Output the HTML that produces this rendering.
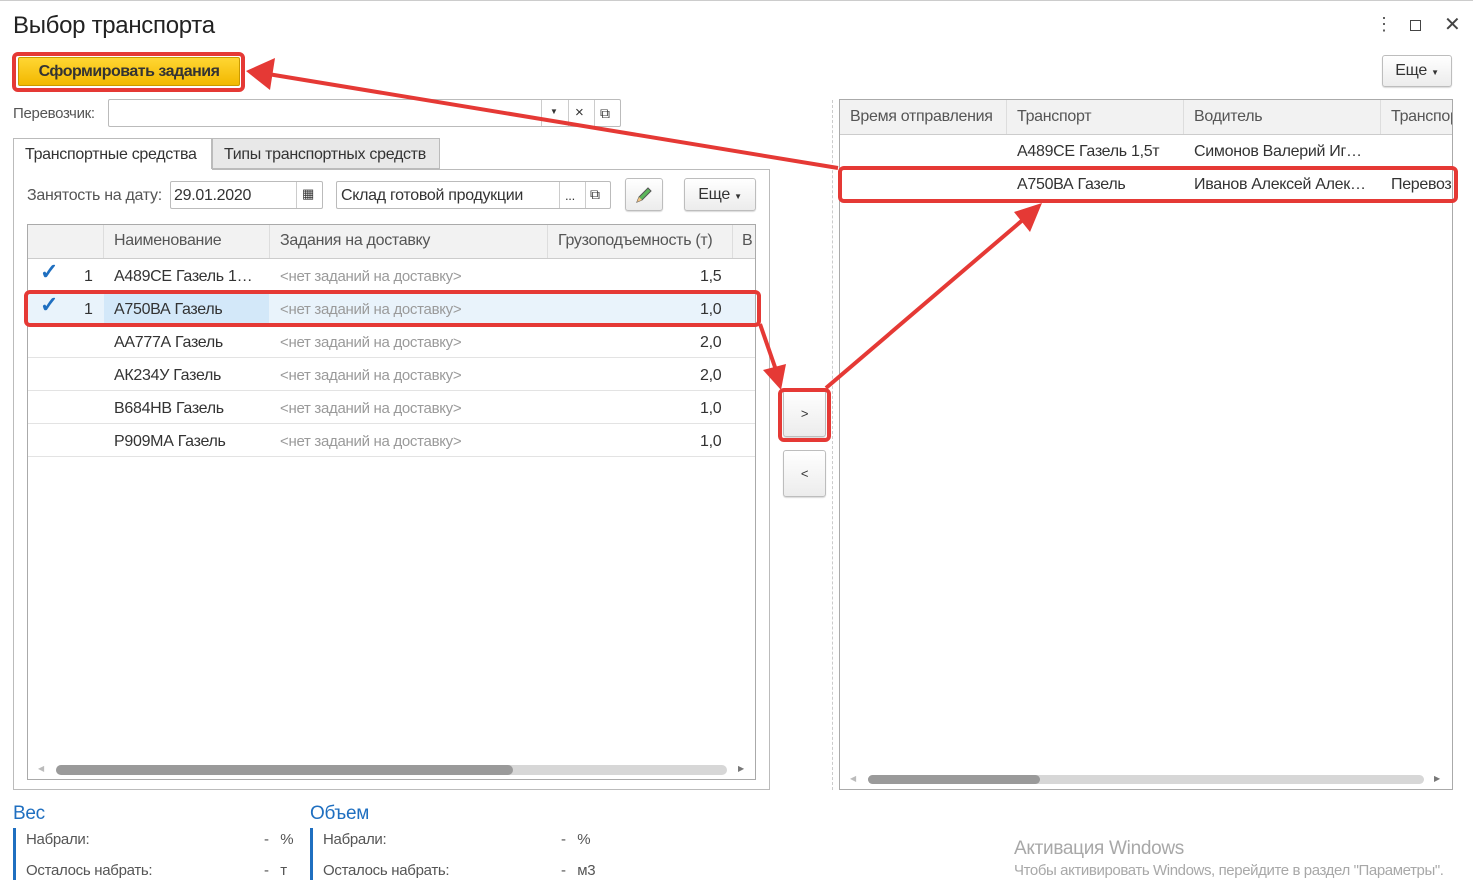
<!DOCTYPE html>
<html><head><meta charset="utf-8"><style>
*{box-sizing:border-box;margin:0;padding:0}
body{width:1473px;height:889px;background:#fff;font-family:"Liberation Sans",Arial,sans-serif;color:#333;position:relative;overflow:hidden;font-size:15px;letter-spacing:-0.3px}
.a{position:absolute;white-space:nowrap}
.bx{position:absolute;border:1px solid #bbb;background:#fff}
.btn{position:absolute;border:1px solid #bdbdbd;border-radius:3px;background:linear-gradient(#fff,#ececec);box-shadow:0 1px 1px rgba(0,0,0,.15)}
.hdr{background:#f2f2f2}
.gray{color:#9a9a9a}
.red{position:absolute;border:4px solid #e53935;border-radius:6px}
</style></head><body>
<div class="a" style="left:0;top:0;width:1473px;height:1px;background:#ccc"></div>
<div class="a" style="left:13px;top:12px;font-size:24px;color:#222">Выбор транспорта</div>
<div class="a" style="left:1375px;top:14px;font-size:18px;color:#555">⋮</div>
<div class="a" style="left:1410px;top:20px;width:11px;height:11px;border:1.5px solid #444"></div>
<div class="a" style="left:1444px;top:12px;font-size:20px;color:#444">✕</div>

<div class="a" style="left:18px;top:57px;width:222px;height:29px;border:1px solid #c99a00;border-radius:2px;background:linear-gradient(#ffd633,#f2b800);font-weight:bold;font-size:16px;letter-spacing:-0.5px;color:#333;text-align:center;line-height:27px">Сформировать задания</div>
<div class="red" style="left:12px;top:52px;width:233px;height:40px"></div>

<div class="btn" style="left:1382px;top:55px;width:70px;height:32px;line-height:30px;text-align:center;font-size:16px">Еще <span style="font-size:8px">▼</span></div>

<div class="a" style="left:13px;top:105px;color:#555">Перевозчик:</div>
<div class="bx" style="left:108px;top:99px;width:513px;height:28px;border-radius:2px"></div>
<div class="a" style="left:541px;top:100px;width:1px;height:26px;background:#ccc"></div>
<div class="a" style="left:568px;top:100px;width:1px;height:26px;background:#ccc"></div>
<div class="a" style="left:594px;top:100px;width:1px;height:26px;background:#ccc"></div>
<div class="a" style="left:550px;top:107px;font-size:8px">▼</div>
<div class="a" style="left:575px;top:104px;font-size:15px">×</div>
<div class="a" style="left:600px;top:105px;font-size:14px">⧉</div>

<div class="a" style="left:13px;top:138px;width:199px;height:33px;border:1px solid #bbb;border-bottom:none;background:#fff;padding:7px 0 0 11px;font-size:16px">Транспортные средства</div>
<div class="a" style="left:212px;top:138px;width:228px;height:31px;border:1px solid #bbb;background:#e8e8e8;padding:7px 0 0 11px;font-size:16px">Типы транспортных средств</div>
<div class="bx" style="left:13px;top:169px;width:757px;height:621px;border-top:none"></div>
<div class="a" style="left:212px;top:169px;width:558px;height:1px;background:#bbb"></div>

<div class="a" style="left:27px;top:187px;color:#555;font-size:16px">Занятость на дату:</div>
<div class="bx" style="left:170px;top:181px;width:153px;height:28px;border-radius:2px;padding:5px 3px;font-size:16px">29.01.2020</div>
<div class="a" style="left:296px;top:182px;width:1px;height:26px;background:#ccc"></div>
<div class="a" style="left:302px;top:186px;font-size:13px">▦</div>
<div class="bx" style="left:336px;top:181px;width:275px;height:28px;border-radius:2px;padding:5px 4px;font-size:16px">Склад готовой продукции</div>
<div class="a" style="left:559px;top:182px;width:1px;height:26px;background:#ccc"></div>
<div class="a" style="left:585px;top:182px;width:1px;height:26px;background:#ccc"></div>
<div class="a" style="left:565px;top:188px;font-size:13px">...</div>
<div class="a" style="left:590px;top:186px;font-size:14px">⧉</div>
<div class="btn" style="left:625px;top:178px;width:38px;height:33px"></div>
<svg class="a" style="left:634px;top:185px" width="20" height="20"><path d="M3 17 L5 12 L14 3 L17 6 L8 15 Z" fill="#5cb85c" stroke="#555" stroke-width="1"/><path d="M3 17 L5 12 L8 15Z" fill="#f0c080"/></svg>
<div class="btn" style="left:684px;top:178px;width:72px;height:33px;line-height:31px;text-align:center;font-size:16px">Еще <span style="font-size:8px">▼</span></div>

<div class="bx" style="left:27px;top:224px;width:729px;height:556px;border-color:#aaa"></div>
<div class="a hdr" style="left:28px;top:225px;width:727px;height:34px;border-bottom:1px solid #ccc"></div>
<div class="a" style="left:103px;top:225px;width:1px;height:33px;background:#ddd"></div>
<div class="a" style="left:269px;top:225px;width:1px;height:33px;background:#ddd"></div>
<div class="a" style="left:547px;top:225px;width:1px;height:33px;background:#ddd"></div>
<div class="a" style="left:732px;top:225px;width:1px;height:33px;background:#ddd"></div>
<div class="a" style="left:114px;top:232px;color:#555;font-size:16px">Наименование</div>
<div class="a" style="left:280px;top:232px;color:#555;font-size:16px">Задания на доставку</div>
<div class="a" style="left:558px;top:232px;color:#555;font-size:16px">Грузоподъемность (т)</div>
<div class="a" style="left:742px;top:232px;color:#555;font-size:16px">В</div>

<div class="a" style="left:28px;top:292px;width:727px;height:33px;background:#e9f3fb"></div>
<div class="a" style="left:104px;top:292px;width:165px;height:33px;background:#d3e8f9"></div>
<div class="a" style="left:28px;top:291px;width:727px;height:1px;background:#e3e3e3"></div>
<div class="a" style="left:28px;top:357px;width:727px;height:1px;background:#e3e3e3"></div>
<div class="a" style="left:28px;top:390px;width:727px;height:1px;background:#e3e3e3"></div>
<div class="a" style="left:28px;top:423px;width:727px;height:1px;background:#e3e3e3"></div>
<div class="a" style="left:28px;top:456px;width:727px;height:1px;background:#e3e3e3"></div>

<div class="a" style="left:40px;top:259px;color:#1f6fc0;font-size:22px;font-weight:bold">✓</div>
<div class="a" style="left:40px;top:292px;color:#1f6fc0;font-size:22px;font-weight:bold">✓</div>
<div class="a" style="left:84px;top:268px;font-size:16px">1</div>
<div class="a" style="left:84px;top:301px;font-size:16px">1</div>

<div class="a" style="left:114px;top:268px;font-size:16px">А489СЕ Газель 1…</div>
<div class="a" style="left:114px;top:301px;font-size:16px">А750ВА Газель</div>
<div class="a" style="left:114px;top:334px;font-size:16px">АА777А Газель</div>
<div class="a" style="left:114px;top:367px;font-size:16px">АК234У Газель</div>
<div class="a" style="left:114px;top:400px;font-size:16px">В684НВ Газель</div>
<div class="a" style="left:114px;top:433px;font-size:16px">Р909МА Газель</div>
<div class="a gray" style="left:280px;top:268px">&lt;нет заданий на доставку&gt;</div>
<div class="a gray" style="left:280px;top:301px">&lt;нет заданий на доставку&gt;</div>
<div class="a gray" style="left:280px;top:334px">&lt;нет заданий на доставку&gt;</div>
<div class="a gray" style="left:280px;top:367px">&lt;нет заданий на доставку&gt;</div>
<div class="a gray" style="left:280px;top:400px">&lt;нет заданий на доставку&gt;</div>
<div class="a gray" style="left:280px;top:433px">&lt;нет заданий на доставку&gt;</div>
<div class="a" style="left:700px;top:268px;font-size:16px">1,5</div>
<div class="a" style="left:700px;top:301px;font-size:16px">1,0</div>
<div class="a" style="left:700px;top:334px;font-size:16px">2,0</div>
<div class="a" style="left:700px;top:367px;font-size:16px">2,0</div>
<div class="a" style="left:700px;top:400px;font-size:16px">1,0</div>
<div class="a" style="left:700px;top:433px;font-size:16px">1,0</div>
<div class="red" style="left:24px;top:290px;width:737px;height:37px"></div>

<div class="a" style="left:56px;top:765px;width:671px;height:10px;border-radius:5px;background:#d7d7d7"></div>
<div class="a" style="left:56px;top:765px;width:457px;height:10px;border-radius:5px;background:#9a9a9a"></div>
<div class="a" style="left:38px;top:764px;font-size:8px;color:#bbb">◀</div>
<div class="a" style="left:738px;top:764px;font-size:8px;color:#777">▶</div>

<div class="btn" style="left:783px;top:390px;width:43px;height:47px;text-align:center;line-height:45px;font-size:13px">&gt;</div>
<div class="red" style="left:778px;top:388px;width:53px;height:54px"></div>
<div class="btn" style="left:783px;top:450px;width:43px;height:47px;text-align:center;line-height:45px;font-size:13px">&lt;</div>

<div class="a" style="left:832px;top:100px;width:0;height:690px;border-left:1px dashed #ccc"></div>
<div class="bx" style="left:839px;top:99px;width:614px;height:691px;border-color:#aaa"></div>
<div class="a hdr" style="left:840px;top:100px;width:612px;height:35px;border-bottom:1px solid #ccc"></div>
<div class="a" style="left:1006px;top:100px;width:1px;height:34px;background:#ddd"></div>
<div class="a" style="left:1183px;top:100px;width:1px;height:34px;background:#ddd"></div>
<div class="a" style="left:1380px;top:100px;width:1px;height:34px;background:#ddd"></div>
<div class="a" style="left:850px;top:108px;color:#555;font-size:16px">Время отправления</div>
<div class="a" style="left:1017px;top:108px;color:#555;font-size:16px">Транспорт</div>
<div class="a" style="left:1194px;top:108px;color:#555;font-size:16px">Водитель</div>
<div class="a" style="left:1391px;top:108px;color:#555;font-size:16px;width:61px;overflow:hidden">Транспорт</div>
<div class="a" style="left:1017px;top:143px;font-size:16px">А489СЕ Газель 1,5т</div>
<div class="a" style="left:1194px;top:143px;font-size:16px">Симонов Валерий Иг…</div>
<div class="a" style="left:1017px;top:176px;font-size:16px">А750ВА Газель</div>
<div class="a" style="left:1194px;top:176px;font-size:16px">Иванов Алексей Алек…</div>
<div class="a" style="left:1391px;top:176px;font-size:16px;width:61px;overflow:hidden">Перевозчик</div>
<div class="red" style="left:838px;top:166px;width:620px;height:37px"></div>
<div class="a" style="left:868px;top:775px;width:556px;height:9px;border-radius:5px;background:#d7d7d7"></div>
<div class="a" style="left:868px;top:775px;width:172px;height:9px;border-radius:5px;background:#9a9a9a"></div>
<div class="a" style="left:850px;top:774px;font-size:8px;color:#bbb">◀</div>
<div class="a" style="left:1434px;top:774px;font-size:8px;color:#777">▶</div>

<div class="a" style="left:13px;top:803px;color:#1f6fc0;font-size:19px">Вес</div>
<div class="a" style="left:13px;top:828px;width:3px;height:52px;background:#1f6fc0"></div>
<div class="a" style="left:26px;top:831px;color:#555">Набрали:</div>
<div class="a" style="left:264px;top:831px;color:#555">-&nbsp;&nbsp;&nbsp;%</div>
<div class="a" style="left:26px;top:862px;color:#555">Осталось набрать:</div>
<div class="a" style="left:264px;top:862px;color:#555">-&nbsp;&nbsp;&nbsp;т</div>
<div class="a" style="left:310px;top:803px;color:#1f6fc0;font-size:19px">Объем</div>
<div class="a" style="left:310px;top:828px;width:3px;height:52px;background:#1f6fc0"></div>
<div class="a" style="left:323px;top:831px;color:#555">Набрали:</div>
<div class="a" style="left:561px;top:831px;color:#555">-&nbsp;&nbsp;&nbsp;%</div>
<div class="a" style="left:323px;top:862px;color:#555">Осталось набрать:</div>
<div class="a" style="left:561px;top:862px;color:#555">-&nbsp;&nbsp;&nbsp;м3</div>

<div class="a" style="left:1014px;top:838px;color:#a8a8a8;font-size:19px">Активация Windows</div>
<div class="a" style="left:1014px;top:862px;color:#a8a8a8;font-size:15px;letter-spacing:-0.4px">Чтобы активировать Windows, перейдите в раздел "Параметры".</div>

<svg class="a" style="left:0;top:0" width="1473" height="889">
<g stroke="#e53935" stroke-width="4" fill="#e53935">
<line x1="838" y1="168" x2="268" y2="74"/>
<polygon points="246,71 275,58 270,90" stroke="none"/>
<line x1="760" y1="324" x2="776" y2="370"/>
<polygon points="781,390 763,370 786,364" stroke="none"/>
<line x1="826" y1="388" x2="1025" y2="218"/>
<polygon points="1042,203 1030,232 1014,212" stroke="none"/>
</g>
</svg>
</body></html>
